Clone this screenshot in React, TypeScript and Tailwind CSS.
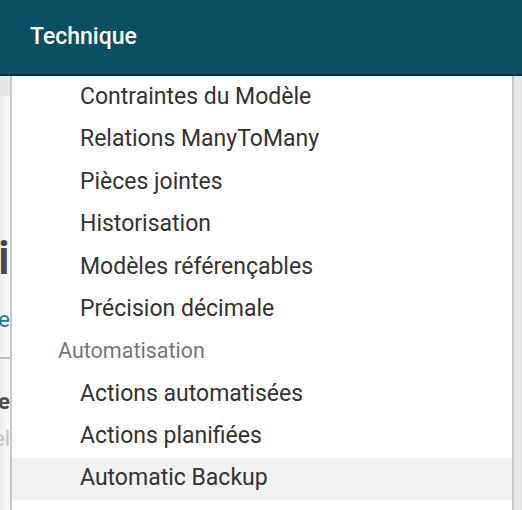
const ITEMS: { label: string; header?: boolean; active?: boolean }[] = [
  { label: 'Contraintes du Modèle' },
  { label: 'Relations ManyToMany' },
  { label: 'Pièces jointes' },
  { label: 'Historisation' },
  { label: 'Modèles référençables' },
  { label: 'Précision décimale' },
  { label: 'Automatisation', header: true },
  { label: 'Actions automatisées' },
  { label: 'Actions planifiées' },
  { label: 'Automatic Backup', active: true },
];

function PageBehind() {
  // strip of the page that peeks out on the left of the dropdown
  return (
    <div className="flex w-[10px] shrink-0 flex-col overflow-hidden bg-gradient-to-r from-[#eeeeee] to-[#f9f9f9]">
      <div className="h-[20px] shrink-0 bg-[#e9e9e9]" />
      <div className="h-[138px] shrink-0" />
      <div className="flex h-[48px] shrink-0 justify-end text-[48px] leading-[48px] font-medium text-[#4d4646]">
        <span className="whitespace-nowrap">Modèli</span>
      </div>
      <div className="h-[27px] shrink-0" />
      <div className="flex h-[22px] shrink-0 justify-end text-[22px] leading-[22px] text-[#1f7a8c]">
        <span className="whitespace-nowrap">Filtre</span>
      </div>
      <div className="h-[26px] shrink-0" />
      <div className="h-[2px] shrink-0 bg-[#bdbdbd]" />
      <div className="h-[32px] shrink-0" />
      <div className="flex h-[22px] shrink-0 justify-end text-[22px] leading-[22px] font-bold text-[#4c4c4c]">
        <span className="whitespace-nowrap">Nome</span>
      </div>
      <div className="h-[15px] shrink-0" />
      <div className="flex h-[22px] shrink-0 justify-end text-[22px] leading-[22px] text-[#c4c4c4]">
        <span className="whitespace-nowrap">Modèl</span>
      </div>
    </div>
  );
}

export default function App() {
  return (
    <div className="flex h-[510px] w-[522px] flex-col overflow-hidden bg-white font-['Roboto',sans-serif]">
      {/* Header */}
      <div className="flex h-[76px] shrink-0 items-center border-b-2 border-[#05303d] bg-[#0b4f63] pl-[30px]">
        <span className="text-[23px] font-medium text-white">Technique</span>
      </div>

      <div className="flex min-h-0 flex-1">
        <PageBehind />

        {/* Dropdown menu */}
        <div className="flex-1 border-x-2 border-[#c9c9c9] bg-white">
          {ITEMS.map((item) => (
            <div
              key={item.label}
              className={`flex h-[42.4px] items-center ${item.active ? 'bg-[#f2f2f2]' : ''} ${
                item.header ? 'pl-[46px] text-[21.5px] text-[#777777]' : 'pl-[68px] text-[23px] text-[#333333]'
              }`}
            >
              {item.label}
            </div>
          ))}
        </div>

        <div className="w-[8px] shrink-0 bg-[#e8e8e8]" />
      </div>
    </div>
  );
}
